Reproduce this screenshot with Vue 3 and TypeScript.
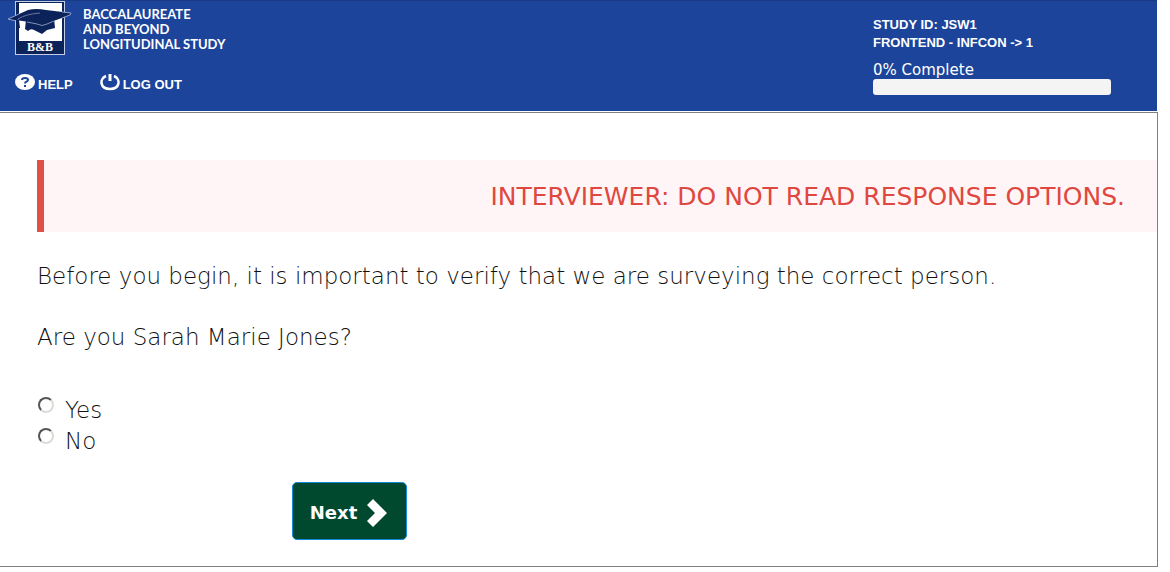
<script setup lang="ts">
import { ref } from 'vue'

const studyId = 'JSW1'
const progress = 0
const options = ['Yes', 'No']
const answer = ref<string | null>(null)
</script>

<template>
  <div class="page">
    <header class="header">
      <div class="left">
        <div class="brand">
          <svg class="logo" viewBox="0 0 66 54" aria-hidden="true">
            <rect x="7" y="0" width="50" height="54" fill="#c3cee6" />
            <rect x="8" y="1" width="48" height="52" fill="#0b2358" />
            <rect x="11" y="2" width="43" height="38" fill="#ffffff" />
            <path d="M18 19 L17 28 L20 30 Q23 27 26 29 L34 33 L39 29 L47 27 L46 17 Z" fill="#0b2358" />
            <path d="M0 18 L20 9 Q28 7 38 9 L63 12 L62 14 L40 22 Q34 25 29 22 Z" fill="#0b2358" />
            <path d="M0 18 L11 13 M54 11 L63 12 L62 14 L54 17 M0 18 L8 20" fill="none" stroke="#8fa1c9" stroke-width="1" />
            <path d="M19 21 L29 23 Q34 26 39 23 L46 20" fill="none" stroke="#8292b8" stroke-width="1" />
            <path d="M32 12 Q18 13 10 18 L10 20" fill="none" stroke="#65789f" stroke-width="1" />
            <path d="M8 19 L11 19 L12 27 L8 27 Z" fill="#0b2358" />
            <text x="32" y="50" text-anchor="middle" class="logo-text">B&amp;B</text>
          </svg>
          <div class="brand-name">Baccalaureate<br />and Beyond<br />Longitudinal Study</div>
        </div>
        <nav class="nav">
          <a href="#help" class="nav-link">
            <svg class="nav-icon" viewBox="0 0 20 18" aria-hidden="true">
              <ellipse cx="10" cy="8" rx="10" ry="8" fill="#ffffff" />
              <path d="M7 6 Q7 4 10 4 Q13 4 13 6 Q13 7 11 8 Q10 8 10 9.500" fill="none" stroke="#1c449b" stroke-width="2" />
              <rect x="9" y="11" width="2" height="2" fill="#1c449b" />
            </svg>
            <span class="nav-text">HELP</span>
          </a>
          <a href="#logout" class="nav-link">
            <svg class="nav-icon" viewBox="0 0 20 18" aria-hidden="true">
              <path d="M6 2 C-1 5 0 15 10 15 C20 15 21 5 14 2" fill="none" stroke="#ffffff" stroke-width="2.500" />
              <path d="M10 0 V7" stroke="#ffffff" stroke-width="3" />
            </svg>
            <span class="nav-text">LOG OUT</span>
          </a>
        </nav>
      </div>
      <div class="status">
        <div class="study">STUDY ID: {{ studyId }}</div>
        <div class="study">FRONTEND - INFCON -&gt; 1</div>
        <div id="progress-label" class="percent">{{ progress }}% Complete</div>
        <div class="track" role="progressbar" aria-labelledby="progress-label" :aria-valuenow="progress">
          <div class="fill" :style="{ width: progress + '%' }"></div>
        </div>
      </div>
    </header>
    <main class="main">
      <div class="notice">INTERVIEWER: DO NOT READ RESPONSE OPTIONS.</div>
      <form class="form" @submit.prevent>
        <p class="line">Before you begin, it is important to verify that we are surveying the correct person.</p>
        <p id="question" class="line">Are you Sarah Marie Jones?</p>
        <div class="options" role="radiogroup" aria-labelledby="question">
          <label v-for="option in options" :key="option" class="option">
            <input v-model="answer" class="radio" type="radio" name="identity" :value="option" />
            <span>{{ option }}</span>
          </label>
        </div>
        <button class="next" type="submit">
          <span>Next</span>
          <svg class="chevron" viewBox="0 0 20 28" aria-hidden="true">
            <path d="M6 0 L20 14 L6 28 L0 22 L8 14 L0 6 Z" fill="#ffffff" />
          </svg>
        </button>
      </form>
    </main>
  </div>
</template>

<style>
body {
  background: #ffffff;
}
</style>

<style scoped>
.page {
  margin-right: 12px;
  font-family: "DejaVu Sans", Verdana, sans-serif;
  color: #111111;
}
.header {
  box-sizing: border-box;
  display: flex;
  justify-content: space-between;
  min-height: 111px;
  margin-right: 1px;
  border-top: 1px solid #173a83;
  background: #1c449b;
  color: #ffffff;
}
.left {
  padding-left: 8px;
}
.brand {
  display: flex;
  gap: 9px;
}
.logo {
  width: 66px;
  height: 54px;
}
.logo-text {
  font: bold 12px "Liberation Serif", serif;
  fill: #ffffff;
}
.brand-name {
  padding-top: 6px;
  font: bold 13px/15px Lato, sans-serif;
  text-transform: uppercase;
}
.nav {
  display: flex;
  gap: 27px;
  padding: 19px 0 0 7px;
}
.nav-link {
  display: flex;
  align-items: flex-start;
  gap: 3px;
  color: #ffffff;
  font: bold 13px/16px "Liberation Sans", Arial, sans-serif;
  text-decoration: none;
}
.nav-icon {
  width: 20px;
  height: 18px;
}
.nav-text {
  padding-top: 3px;
}
.status {
  width: 238px;
  margin-right: 46px;
  padding-top: 15px;
}
.study {
  font: bold 13px/18px "Liberation Sans", Arial, sans-serif;
}
.percent {
  margin-top: 9px;
  font-size: 15px;
  line-height: 18px;
}
.track {
  height: 16px;
  border-radius: 3px;
  background: #f4f4f4;
  overflow: hidden;
}
.fill {
  height: 100%;
  background: #5cb85c;
}
.main {
  margin-top: 1px;
  padding: 47px 0 26px 37px;
  border: solid #808080;
  border-width: 1px 1px 1px 0;
}
.notice {
  padding: 21px 32px 19px 0;
  border-left: 7px solid #df5049;
  background: #fff5f6;
  color: #df4840;
  font-size: 25px;
  line-height: 32px;
  text-align: right;
}
.form {
  padding-top: 29px;
}
.line {
  margin: 0 0 30px;
  font-size: 23px;
  font-weight: 200;
  line-height: 31px;
}
.options {
  padding-top: 12px;
}
.option {
  display: flex;
  gap: 11px;
  width: max-content;
  font-size: 23px;
  font-weight: 200;
  line-height: 31px;
}
.radio {
  appearance: none;
  box-sizing: border-box;
  width: 16px;
  height: 16px;
  margin: 2px 0 0 1px;
  border: 2px solid;
  border-color: #555555 #dedbd5 #dedbd5 #555555;
  border-radius: 50%;
  background: #ffffff;
}
.radio:checked {
  background: radial-gradient(circle, #333333 35%, #ffffff 40%);
}
.next {
  display: flex;
  align-items: center;
  justify-content: center;
  gap: 10px;
  box-sizing: border-box;
  width: 115px;
  height: 58px;
  margin: 25px 0 0 255px;
  padding: 4px 2px 0 0;
  border: 1px solid #1489d8;
  border-radius: 5px;
  background: #00492f;
  color: #ffffff;
  font: bold 18px/24px "DejaVu Sans", Verdana, sans-serif;
}
.chevron {
  width: 20px;
  height: 28px;
}
</style>
